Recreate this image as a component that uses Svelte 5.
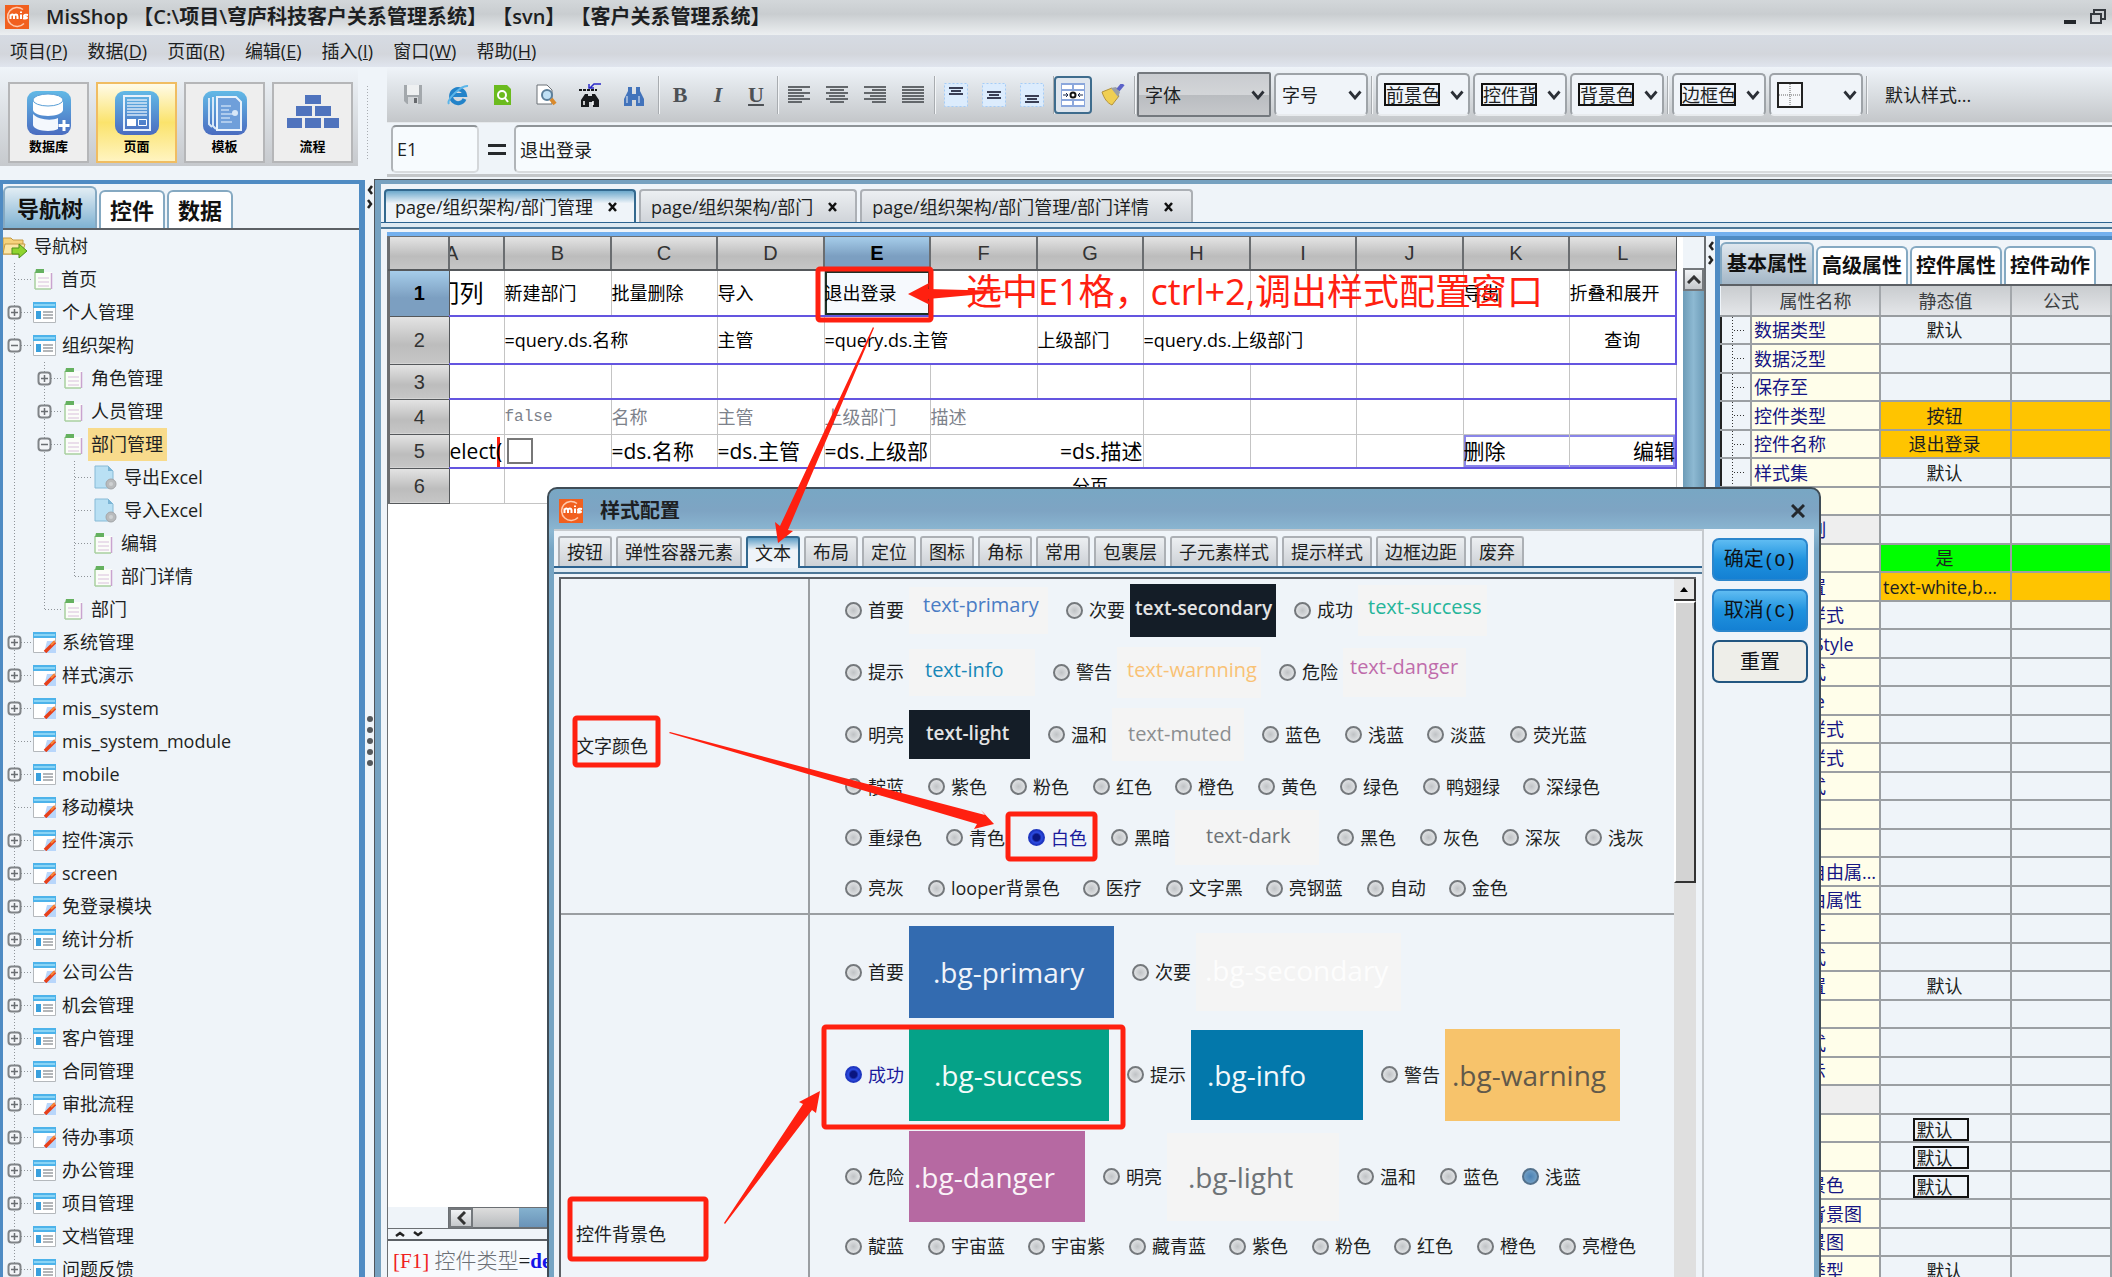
<script>
  const menus = [
    ["项目", "P"],
    ["数据", "D"],
    ["页面", "R"],
    ["编辑", "E"],
    ["插入", "I"],
    ["窗口", "W"],
    ["帮助", "H"],
  ];

  const modes = [
    { icon: "db", label: "数据库" },
    { icon: "page", label: "页面", active: true },
    { icon: "tpl", label: "模板" },
    { icon: "flow", label: "流程" },
  ];

  // guides: one entry per gutter column; v = through line, t = tick, l = last
  const tree = [
    { label: "首页", icon: "page", guides: "t" },
    { label: "个人管理", icon: "table", guides: "t", mark: "+" },
    { label: "组织架构", icon: "table", guides: "t", mark: "-" },
    { label: "角色管理", icon: "page", guides: "vt", mark: "+" },
    { label: "人员管理", icon: "page", guides: "vt", mark: "+" },
    { label: "部门管理", icon: "page", guides: "vt", mark: "-", selected: true },
    { label: "导出Excel", icon: "excel", guides: "vvt" },
    { label: "导入Excel", icon: "excel", guides: "vvt" },
    { label: "编辑", icon: "page", guides: "vvt" },
    { label: "部门详情", icon: "page", guides: "vvl" },
    { label: "部门", icon: "page", guides: "vl" },
    { label: "系统管理", icon: "edit", guides: "t", mark: "+" },
    { label: "样式演示", icon: "edit", guides: "t", mark: "+" },
    { label: "mis_system", icon: "edit", guides: "t", mark: "+" },
    { label: "mis_system_module", icon: "edit", guides: "t" },
    { label: "mobile", icon: "table", guides: "t", mark: "+" },
    { label: "移动模块", icon: "edit", guides: "t" },
    { label: "控件演示", icon: "edit", guides: "t", mark: "+" },
    { label: "screen", icon: "edit", guides: "t", mark: "+" },
    { label: "免登录模块", icon: "edit", guides: "t", mark: "+" },
    { label: "统计分析", icon: "table", guides: "t", mark: "+" },
    { label: "公司公告", icon: "edit", guides: "t", mark: "+" },
    { label: "机会管理", icon: "table", guides: "t", mark: "+" },
    { label: "客户管理", icon: "table", guides: "t", mark: "+" },
    { label: "合同管理", icon: "table", guides: "t", mark: "+" },
    { label: "审批流程", icon: "edit", guides: "t", mark: "+" },
    { label: "待办事项", icon: "edit", guides: "t", mark: "+" },
    { label: "办公管理", icon: "table", guides: "t", mark: "+" },
    { label: "项目管理", icon: "table", guides: "t", mark: "+" },
    { label: "文档管理", icon: "table", guides: "t", mark: "+" },
    { label: "问题反馈", icon: "table", guides: "t", mark: "+" },
  ];

  const pages = ["page/组织架构/部门管理", "page/组织架构/部门", "page/组织架构/部门管理/部门详情"];
  const columns = ["B", "C", "D", "E", "F", "G", "H", "I", "J", "K", "L"];

  const props = [
    { name: "数据类型", value: "默认", guide: true },
    { name: "数据泛型", guide: true },
    { name: "保存至", guide: true },
    { name: "控件类型", value: "按钮", tone: "orange", guide: true },
    { name: "控件名称", value: "退出登录", tone: "orange", guide: true },
    { name: "样式集", value: "默认", guide: true },
    { name: "" },
    { name: "权限控制", group: true },
    { name: "可见", value: "是", tone: "green" },
    { name: "样式配置", value: "text-white,bg-success", tone: "orange" },
    { name: "自定义样式" },
    { name: "headerStyle" },
    { name: "行内样式" },
    { name: "rowstyle" },
    { name: "标题栏样式" },
    { name: "内容区样式" },
    { name: "文字样式" },
    { name: "" },
    { name: "" },
    { name: "外层的自由属性值" },
    { name: "控件自由属性" },
    { name: "控件事件" },
    { name: "提示方式" },
    { name: "显示位置", value: "默认" },
    { name: "" },
    { name: "对齐方式" },
    { name: "错误提示" },
    { name: "颜色", group: true },
    { name: "前景", value: "默认", boxed: true },
    { name: "背景", value: "默认", boxed: true },
    { name: "控件背景色", value: "默认", boxed: true },
    { name: "单元格背景图" },
    { name: "控件背景图" },
    { name: "背景的类型", value: "默认" },
  ];

  const styleTabs = [
    "按钮", "弹性容器元素", "文本", "布局", "定位", "图标", "角标", "常用",
    "包裹层", "子元素样式", "提示样式", "边框边距", "废弃",
  ];

  const pale = "#f4f4f4";
  const navy = "#141d27";

  const textRows = [
    {
      height: 62,
      items: [
        { label: "首要", sw: { text: "text-primary", w: 139, h: 47, bg: pale, fg: "#4a7cc4", left: 14, lift: 10 } },
        { label: "次要", sw: { text: "text-secondary", w: 146, h: 53, bg: navy, fg: "#e4e4e4", left: 5, lift: 4, bold: true } },
        { label: "成功", sw: { text: "text-success", w: 129, h: 51, bg: pale, fg: "#25b59a", left: 10, lift: 6 } },
      ],
    },
    {
      height: 62,
      items: [
        { label: "提示", sw: { text: "text-info", w: 126, h: 47, bg: pale, fg: "#1787b8", left: 16, lift: 4 } },
        { label: "警告", sw: { text: "text-warnning", w: 144, h: 51, bg: pale, fg: "#f9c274", left: 10, lift: 4 } },
        { label: "危险", sw: { text: "text-danger", w: 123, h: 49, bg: pale, fg: "#bf6cab", left: 7, lift: 10 } },
      ],
    },
    {
      height: 63,
      items: [
        { label: "明亮", sw: { text: "text-light", w: 121, h: 49, bg: navy, fg: "#e4e4e4", left: 17, lift: 4, bold: true } },
        { label: "温和", sw: { text: "text-muted", w: 132, h: 53, bg: pale, fg: "#8b8e90", left: 16, lift: 2 } },
        { label: "蓝色" }, { label: "浅蓝" }, { label: "淡蓝" }, { label: "荧光蓝" },
      ],
    },
    {
      height: 41,
      items: ["靛蓝", "紫色", "粉色", "红色", "橙色", "黄色", "绿色", "鸭翅绿", "深绿色"].map((label) => ({ label })),
    },
    {
      height: 61,
      items: [
        { label: "重绿色" }, { label: "青色" }, { label: "白色", checked: true },
        { label: "黑暗", sw: { text: "text-dark", w: 144, h: 55, bg: pale, fg: "#6d7276", left: 31, lift: 4 } },
        { label: "黑色" }, { label: "灰色" }, { label: "深灰" }, { label: "浅灰" },
      ],
    },
    {
      height: 40,
      items: ["亮灰", "looper背景色", "医疗", "文字黑", "亮钢蓝", "自动", "金色"].map((label) => ({ label })),
    },
  ];

  const bgRows = [
    {
      height: 102,
      items: [
        { label: "首要", sw: { text: ".bg-primary", w: 205, h: 92, bg: "#336bb0", fg: "#f0f4fa", left: 24, lift: 0, big: true } },
        { label: "次要", sw: { text: ".bg-secondary", w: 205, h: 78, bg: pale, fg: "#fdfdfd", left: 9, lift: 4, big: true } },
      ],
    },
    {
      height: 103,
      items: [
        { label: "成功", checked: true, sw: { text: ".bg-success", w: 200, h: 92, bg: "#05a288", fg: "#f2fbf9", left: 25, lift: 0, big: true } },
        { label: "提示", sw: { text: ".bg-info", w: 172, h: 90, bg: "#0378ab", fg: "#f2f8fb", left: 16, lift: 0, big: true } },
        { label: "警告", sw: { text: ".bg-warning", w: 175, h: 92, bg: "#f7c36b", fg: "#62594a", left: 7, lift: 0, big: true } },
      ],
    },
    {
      height: 101,
      items: [
        { label: "危险", sw: { text: ".bg-danger", w: 176, h: 91, bg: "#b669a2", fg: "#faf3f8", left: 5, lift: 0, big: true } },
        { label: "明亮", sw: { text: ".bg-light", w: 172, h: 88, bg: pale, fg: "#6d7276", left: 21, lift: 0, big: true } },
        { label: "温和" }, { label: "蓝色" }, { label: "浅蓝", hover: true },
      ],
    },
    {
      height: 38,
      items: ["靛蓝", "宇宙蓝", "宇宙紫", "藏青蓝", "紫色", "粉色", "红色", "橙色", "亮橙色"].map((label) => ({ label })),
    },
  ];

  const sections = [
    { key: "text", title: "文字颜色", rows: textRows },
    { key: "bg", title: "控件背景色", rows: bgRows },
  ];
</script>

{#snippet logo()}
  <svg class="logo" viewBox="0 0 24 24" aria-hidden="true">
    <rect width="24" height="24" fill="#f1601f" />
    <path d="M19 18.500a9.500 9.500 0 1 1-1-14" fill="none" stroke="#ffc9ac" stroke-width="1.500" />
    <path d="M5.500 14V9.500M5.500 11c.8-2 3.500-2 3.500 .5V14M9 11c.8-2 3.500-2 3.500 .5V14M16 9.500V14M16 6.500V8M23 10c-4.500-1-5 1.500-2.500 2s2 2-2.500 1.300" fill="none" stroke="#fff" stroke-width="2" />
  </svg>
{/snippet}

{#snippet chevron()}
  <svg class="chevron" viewBox="0 0 14 10" aria-hidden="true">
    <path d="M1.500 1.500L7 8l5.500-6.500" fill="none" stroke="#2b2f36" stroke-width="2.800" />
  </svg>
{/snippet}

{#snippet modeIcon(kind)}
  <svg class="mode-icon" viewBox="0 0 46 46" aria-hidden="true">
    {#if kind !== "flow"}
      <defs>
        <linearGradient id="tile-{kind}" x1="0" y1="0" x2="0" y2="1">
          <stop offset="0" stop-color="#62b9e6" />
          <stop offset="1" stop-color="#4a6cc0" />
        </linearGradient>
      </defs>
      <rect x="1" y="1" width="44" height="44" rx="9" fill="url(#tile-{kind})" />
    {/if}
    {#if kind === "db"}
      <path d="M7 11v9c0 3 7 6 15 6s15-3 15-6v-9z" fill="#fff" />
      <ellipse cx="22" cy="10" rx="15" ry="6" fill="#fff" stroke="#5a9fd6" />
      <path d="M7 24v11c0 3 7 6 15 6 4 0 8-1 10-2V28c-6 3-20 2-25-4z" fill="#f4f8fd" />
      <path d="M38 30v11M32.500 35.500h11" stroke="#fff" stroke-width="3" />
    {:else if kind === "page"}
      <rect x="10" y="6" width="26" height="34" fill="none" stroke="#e7f1fb" stroke-width="2" />
      <path d="M13 10h20M13 13h20M13 16h20M13 19h20M13 22h20M13 25h20" stroke="#d8e8f8" stroke-width="1.500" />
      <path d="M13 29h9v7h-9z" fill="#fff" />
      <path d="M24.500 29.500h8v6h-8z" fill="none" stroke="#fff" />
    {:else if kind === "tpl"}
      <path d="M7 8v26l3 3M11 7v29l3 3" fill="none" stroke="#d8e8f8" stroke-width="2" />
      <path d="M15 7h19l5 5v28H15z" fill="#6f9fda" stroke="#eaf3fc" stroke-width="2" />
      <path d="M19 16h10M19 20h8M19 24h12M19 28h9M19 32h11" stroke="#c4daf3" stroke-width="1.500" />
      <circle cx="33" cy="23" r="3" fill="#d8e8f8" />
    {:else}
      <path d="M15 5h16v9H15zM6 16h16v10H6zM25 16h16v10H25zM-3 28h15v10H-3zM15 28h16v10H15zM34 28h15v10H34z" fill="#4f73bd" />
    {/if}
  </svg>
{/snippet}

{#snippet treeIcon(kind)}
  {#if kind === "page"}
    <svg width="22" height="23" viewBox="0 0 22 23" aria-hidden="true">
      <path d="M2 4h17v17H2z" fill="#fbfdf9" />
      <path d="M2 4v17M2 21h16" stroke="#a9cfa0" stroke-width="1.500" />
      <path d="M18.500 5v16" stroke="#c9a3cf" stroke-width="1.500" />
      <path d="M3 1h8v4H2z" fill="#65b15f" />
      <path d="M5 10h11M5 14h11M5 18h11" stroke="#d8bfdb" />
    </svg>
  {:else if kind === "excel"}
    <svg width="25" height="25" viewBox="0 0 25 25" aria-hidden="true">
      <path d="M2 1h13l5 5v17H2z" fill="#b9e0f4" stroke="#87bad6" />
      <path d="M15 1l5 5h-5z" fill="#7cb5d6" />
      <circle cx="18" cy="19" r="5" fill="#b9bbbd" stroke="#a4a6a8" />
      <circle cx="18" cy="19" r="2" fill="#cfd1d3" />
    </svg>
  {:else}
    <svg width="23" height="21" viewBox="0 0 23 21" aria-hidden="true">
      <path d="M.5.500h22v20H.5z" fill="#fff" stroke="#b4b8bc" />
      <path d="M0 0h23v6H0z" fill="#4db3ea" />
      <path d="M1 2h21v2H1z" fill="#8ad4f5" />
      {#if kind === "table"}
        <path d="M3 9h5v8H3z" fill="#3aa0dd" />
        <path d="M10 10h10M10 13h10M10 16h10" stroke="#9a9ea2" stroke-width="1.500" />
      {:else}
        <path d="M14 9h9v12H11z" fill="#b8d6fb" />
        <path d="M22 10L12 20" stroke="#e8401a" stroke-width="3.500" />
        <path d="M22 9l-4 4" stroke="#f78a3a" stroke-width="2" />
      {/if}
    </svg>
  {/if}
{/snippet}

{#snippet guide(kind, mark)}
  <svg width="30" height="33" viewBox="0 0 30 33" aria-hidden="true">
    <path d={kind === "l" ? "M11.500 0v17" : "M11.500 0v33"} stroke="#8f9499" stroke-dasharray="1 2" />
    {#if kind !== "v"}
      <path d="M12 16.500h17" stroke="#8f9499" stroke-dasharray="1 2" />
    {/if}
    {#if mark}
      <rect x="5.500" y="10.500" width="12" height="12" rx="3" fill="#f3f5f8" stroke="#808488" stroke-width="2" />
      <path d={mark === "+" ? "M8 16.500h7M11.500 13v7" : "M8 16.500h7"} stroke="#6a6e72" stroke-width="1.500" />
    {/if}
  </svg>
{/snippet}

{#snippet align(kind)}
  <button class="tool" aria-label={kind}>
    <svg width="22" height="18" viewBox="0 0 22 18" aria-hidden="true">
      {#each [22, 14, 22, 16, 22, 14] as w, i}
        {@const len = kind === "justify" ? 22 : w}
        <rect
          x={kind === "right" ? 22 - len : kind === "center" ? (22 - len) / 2 : 0}
          y={i * 3}
          width={len}
          height="2"
          fill="#63676b"
        />
      {/each}
    </svg>
  </button>
{/snippet}

{#snippet valign(y)}
  <button class="tool" aria-label="vertical align">
    <svg width="24" height="24" viewBox="0 0 24 24" aria-hidden="true">
      <rect x=".5" y=".5" width="23" height="23" fill="#dcecfd" stroke="#a5cdf8" stroke-dasharray="2 2" />
      <path d="M5 {y}h14M7 {y + 3}h10M5 {y + 6}h14" stroke="#3a3f55" stroke-width="2" />
    </svg>
  </button>
{/snippet}

{#snippet binoculars(fill)}
  <path d="M6 8h4v3h4V8h4l4 8v7h-8v-6h-4v6H2v-7z" fill={fill} />
  <path d="M6 4h4v4H6zM14 4h4v4h-4z" fill={fill} />
  <path d="M5 13v7M17 13v7" stroke="#fff" stroke-opacity=".6" stroke-width="1.500" />
{/snippet}

<div class="app">
  <header class="titlebar">
    {@render logo()}
    <h1>MisShop 【C:\项目\穹庐科技客户关系管理系统】 【svn】 【客户关系管理系统】</h1>
    <button aria-label="最小化">
      <svg width="12" height="16" viewBox="0 0 12 16"><path d="M0 11h12v4H0z" fill="#23272b" /></svg>
    </button>
    <button aria-label="还原">
      <svg width="16" height="16" viewBox="0 0 16 16">
        <path d="M4 4V1h11v9h-3M1 5h10v9H1z" fill="none" stroke="#34393e" stroke-width="2" />
      </svg>
    </button>
  </header>

  <nav class="menubar">
    {#each menus as [label, key]}
      <button>{label}(<u>{key}</u>)</button>
    {/each}
  </nav>

  <div class="ribbon">
    <div class="modes">
      {#each modes as m}
        <button class="mode" class:active={m.active}>
          {@render modeIcon(m.icon)}
          <span>{m.label}</span>
        </button>
      {/each}
    </div>
    <div class="grip"></div>

    <div class="bars">
      <div class="toolbar">
        <button class="tool" aria-label="保存">
          <svg width="20" height="21" viewBox="0 0 20 21">
            <path d="M1 1h18v19H4l-3-3z" fill="#a3a8ac" />
            <path d="M4 1h12v10H4z" fill="#eef0f1" />
            <path d="M5 13h10v7H5z" fill="#d2d5d8" />
            <path d="M11 14h3v5h-3z" fill="#66696d" />
          </svg>
        </button>
        <button class="tool" aria-label="浏览器">
          <svg width="22" height="22" viewBox="0 0 22 22">
            <path d="M17.500 15a7 7 0 1 1 .5-4H6" fill="none" stroke="#2383c9" stroke-width="4" />
            <path d="M2 20C-1 16 14 1 21 2" fill="none" stroke="#5bb6ea" stroke-width="2" />
          </svg>
        </button>
        <button class="tool" aria-label="查询">
          <svg width="17" height="20" viewBox="0 0 17 20">
            <path d="M0 0h13l4 4v16H0z" fill="#6bbb1e" />
            <circle cx="8" cy="10" r="4" fill="none" stroke="#fff" stroke-width="2" />
            <path d="M11 13l3 4" stroke="#fff" stroke-width="2" />
          </svg>
        </button>
        <button class="tool" aria-label="预览">
          <svg width="22" height="22" viewBox="0 0 22 22">
            <path d="M2 1h10l5 5v14H2z" fill="#fff" stroke="#6b7176" />
            <circle cx="12" cy="11" r="5" fill="#bfe0f5" stroke="#5b7f9b" stroke-width="2" />
            <path d="M16 15l4 5" stroke="#d98a2c" stroke-width="4" />
          </svg>
        </button>
        <button class="tool" aria-label="查找替换">
          <svg width="24" height="26" viewBox="0 0 24 26">
            <path d="M7 12h3v2h4v-2h3l4 6v7h-6v-5h-4v5H3v-7z" fill="#17191c" />
            <path d="M6 19v4M15 19v4" stroke="#fff" stroke-width="1.500" />
            <path d="M1 8h18" stroke="#17191c" stroke-width="2" stroke-dasharray="3 1" />
            <path d="M12 6l4-4h7M11 2v4h5" fill="none" stroke="#2a2ac8" stroke-width="1.500" />
          </svg>
        </button>
        <button class="tool" aria-label="查找">
          <svg width="24" height="24" viewBox="0 0 24 24">{@render binoculars("#4273bb")}</svg>
        </button>
        <i class="sep"></i>
        <button class="tool letter"><b>B</b></button>
        <button class="tool letter"><em>I</em></button>
        <button class="tool letter"><u>U</u></button>
        <i class="sep"></i>
        {@render align("left")}
        {@render align("center")}
        {@render align("right")}
        {@render align("justify")}
        <i class="sep"></i>
        {@render valign(5)}
        {@render valign(9)}
        {@render valign(13)}
        <i class="sep"></i>
        <button class="tool pressed" aria-label="合并单元格">
          <svg width="24" height="24" viewBox="0 0 24 24">
            <path d="M0 0h24v24H0z" fill="#8ba7dc" />
            <path d="M1 2h10v4H1zM13 2h10v4H13zM1 18h10v4H1zM13 18h10v4H13zM1 8h22v8H1z" fill="#fff" />
            <path d="M2 12h5M17 12h5M5 10l2 2-2 2M19 10l-2 2 2 2" fill="none" stroke="#1c2a4d" />
            <circle cx="12" cy="12" r="2.500" fill="none" stroke="#111" stroke-width="2" />
          </svg>
        </button>
        <button class="tool" aria-label="格式刷">
          <svg width="24" height="22" viewBox="0 0 24 22">
            <path d="M1 8l10-4 7 8-7 9c-5-2-8-7-10-13z" fill="#f0cf52" stroke="#b3923a" />
            <path d="M10 4l5-1 4 5-2 5z" fill="#9aa0a8" />
            <path d="M17 6l5-6" stroke="#5b62c8" stroke-width="4" />
          </svg>
        </button>
        <i class="sep"></i>
        <div class="combo font">
          <select aria-label="字体"><option>字体</option></select>
          {@render chevron()}
        </div>
        <div class="combo">
          <select aria-label="字号"><option>字号</option></select>
          {@render chevron()}
        </div>
        <i class="sep"></i>
        {#each ["前景色", "控件背景色", "背景色"] as label}
          <div class="combo boxed">
            <select aria-label={label}><option>{label}</option></select>
            {@render chevron()}
          </div>
        {/each}
        <i class="sep"></i>
        <div class="combo boxed">
          <select aria-label="边框色"><option>边框色</option></select>
          {@render chevron()}
        </div>
        <button class="combo border-pick" aria-label="边框">
          <svg width="26" height="26" viewBox="0 0 26 26">
            <rect x="1" y="1" width="24" height="24" fill="#f7f9fc" stroke="#222" stroke-width="2" />
            <path d="M13 2v22M2 13h22" stroke="#666" stroke-dasharray="1 1" />
          </svg>
          {@render chevron()}
        </button>
        <i class="sep"></i>
        <button class="plain">默认样式...</button>
      </div>
      <div class="formula">
        <input class="cell-ref" aria-label="单元格" value="E1" />
        <span class="eq"></span>
        <input class="cell-val" aria-label="内容" value="退出登录" />
      </div>
    </div>
  </div>

  <main>
    <aside class="nav">
      <div class="big-tabs">
        <button class="active">导航树</button>
        <button>控件</button>
        <button>数据</button>
      </div>
      <ul class="tree">
        <li class="root">
          <svg width="25" height="24" viewBox="0 0 25 24" aria-hidden="true">
            <path d="M0 3h8l2 2h10v14H0z" fill="#f5d27b" stroke="#c59a45" />
            <path d="M2 9h20l-3 10H0z" fill="#fbe6a6" stroke="#c59a45" />
            <path d="M9 13h7V9l8 7-8 7v-4H9z" fill="#8fd42f" stroke="#4e8f1c" />
          </svg>
          <span>导航树</span>
        </li>
        {#each tree as node}
          <li>
            {#each node.guides as g, i}
              {@render guide(g, i === node.guides.length - 1 ? node.mark : "")}
            {/each}
            {@render treeIcon(node.icon)}
            <span class:selected={node.selected}>{node.label}</span>
          </li>
        {/each}
      </ul>
    </aside>

    <div class="splitter">
      <svg width="8" height="24" viewBox="0 0 8 24" aria-hidden="true">
        <path d="M6 1L3 5l3 4M2 15l3 4-3 4" fill="none" stroke="#222" stroke-width="2.500" />
      </svg>
      <div class="dots">
        {#each Array(5) as _}<i></i>{/each}
      </div>
    </div>

    <section class="workspace">
      <div class="page-tabs">
        {#each pages as p, i}
          <button class:active={i === 0}>
            {p}
            <svg width="9" height="10" viewBox="0 0 9 10" aria-hidden="true">
              <path d="M1 1l7 8M8 1L1 9" stroke="#111" stroke-width="2.500" />
            </svg>
          </button>
        {/each}
      </div>
      <div class="rule"></div>
      <div class="desk">
        <div class="editor">
          <div class="sheet-wrap">
            <div class="sheet">
              <table class="grid">
                <colgroup>
                  <col class="c-head" />
                  <col class="c-a" />
                  {#each columns as c}<col class:odd={"CEGIK".includes(c)} class="c-std" />{/each}
                </colgroup>
                <thead>
                  <tr>
                    <th></th>
                    <th class="cut">A</th>
                    {#each columns as c}<th class:on={c === "E"}>{c}</th>{/each}
                  </tr>
                </thead>
                <tbody>
                  <tr class="r1 blue">
                    <th class="on">1</th>
                    <td class="end"><span>部门列</span></td>
                    <td>新建部门</td>
                    <td>批量删除</td>
                    <td>导入</td>
                    <td class="picked">退出登录</td>
                    <td></td><td></td><td></td><td></td><td></td>
                    <td>导出</td>
                    <td>折叠和展开</td>
                  </tr>
                  <tr class="r2 blue">
                    <th>2</th>
                    <td></td>
                    <td colspan="2">=query.ds.名称</td>
                    <td>主管</td>
                    <td colspan="2">=query.ds.主管</td>
                    <td>上级部门</td>
                    <td colspan="2">=query.ds.上级部门</td>
                    <td></td><td></td>
                    <td class="mid">查询</td>
                  </tr>
                  <tr class="r3 blue">
                    <th>3</th>
                    {#each Array(12) as _}<td></td>{/each}
                  </tr>
                  <tr class="r4">
                    <th>4</th>
                    <td></td>
                    <td class="dim mono">false</td>
                    <td class="dim">名称</td>
                    <td class="dim">主管</td>
                    <td class="dim">上级部门</td>
                    <td class="dim" colspan="2">描述</td>
                    <td></td><td></td><td></td><td></td><td></td>
                  </tr>
                  <tr class="r5 blue large">
                    <th>5</th>
                    <td class="select-cell">elect(</td>
                    <td><input type="checkbox" aria-label="选择" /></td>
                    <td>=ds.名称</td>
                    <td>=ds.主管</td>
                    <td>=ds.上级部</td>
                    <td class="right" colspan="2">=ds.描述</td>
                    <td></td><td></td><td></td>
                    <td class="box-l">删除</td>
                    <td class="box-r right">编辑</td>
                  </tr>
                  <tr class="r6">
                    <th>6</th>
                    <td></td>
                    <td class="mid" colspan="11">分页</td>
                  </tr>
                </tbody>
              </table>
            </div>
            <div class="vscroll">
              <button aria-label="向上滚动">
                <svg width="14" height="9" viewBox="0 0 14 9"><path d="M1 8l6-6 6 6" fill="none" stroke="#333" stroke-width="3" /></svg>
              </button>
              <div class="thumb"></div>
            </div>
          </div>
          <div class="hscroll">
            <div class="track">
              <button aria-label="向左滚动">
                <svg width="9" height="14" viewBox="0 0 9 14"><path d="M8 1L2 7l6 6" fill="none" stroke="#333" stroke-width="3" /></svg>
              </button>
              <div class="thumb"></div>
            </div>
          </div>
          <div class="hsplit">
            <svg width="28" height="8" viewBox="0 0 28 8" aria-hidden="true">
              <path d="M1 6l4-3 4 3M19 2l4 3 4-3" fill="none" stroke="#222" stroke-width="2.500" />
            </svg>
          </div>
          <div class="hint"><span class="key">[F1]</span> <span class="what">控件类型</span>=<b>default</b></div>
        </div>

        <div class="splitter slim">
          <svg width="8" height="24" viewBox="0 0 8 24" aria-hidden="true">
            <path d="M6 1L3 5l3 4M2 15l3 4-3 4" fill="none" stroke="#222" stroke-width="2.500" />
          </svg>
        </div>

        <aside class="props">
          <div class="big-tabs small">
            <button class="active">基本属性</button>
            <button>高级属性</button>
            <button>控件属性</button>
            <button>控件动作</button>
          </div>
          <table>
            <colgroup><col class="p-guide" /><col class="p-name" /><col class="p-value" /><col /></colgroup>
            <thead>
              <tr><th></th><th>属性名称</th><th>静态值</th><th class="last">公式</th></tr>
            </thead>
            <tbody>
              {#each props as p}
                <tr>
                  <td class="guide" class:lined={p.guide}></td>
                  <td class="name" class:group={p.group}>{p.name}</td>
                  <td class="value {p.tone ?? ''}">
                    {#if p.boxed}<span class="frame">{p.value}</span>{:else}{p.value ?? ""}{/if}
                  </td>
                  <td class={p.tone ?? ""}></td>
                </tr>
              {/each}
            </tbody>
          </table>
        </aside>
      </div>
    </section>
  </main>

  <div class="dialog" role="dialog" aria-label="样式配置">
    <header>
      {@render logo()}
      <h2>样式配置</h2>
      <button aria-label="关闭">
        <svg width="14" height="14" viewBox="0 0 14 14"><path d="M1 1l12 12M13 1L1 13" stroke="#23282d" stroke-width="3" /></svg>
      </button>
    </header>
    <div class="dialog-body">
      <div class="dialog-main">
        <div class="style-tabs">
          {#each styleTabs as t}
            <button class:active={t === "文本"}>{t}</button>
          {/each}
        </div>
        <div class="rule"></div>
        <div class="pane">
          <div class="sections">
            {#each sections as s}
              <fieldset class={s.key} aria-label={s.title}>
                <div class="section-title">{s.title}</div>
                <div class="rows">
                  {#each s.rows as row}
                    <div class="row" style="height: {row.height}px">
                      {#each row.items as item}
                        <label class="opt" class:checked={item.checked} class:has-swatch={item.sw}>
                          <input type="radio" name={s.key} checked={item.checked} class:hover={item.hover} />
                          <span>{item.label}</span>
                          {#if item.sw}
                            <span
                              class="swatch"
                              class:big={item.sw.big}
                              class:bold={item.sw.bold}
                              style="width: {item.sw.w}px; height: {item.sw.h}px; background: {item.sw.bg}; color: {item.sw.fg}; padding: 0 0 {item.sw.lift}px {item.sw.left}px"
                            >{item.sw.text}</span>
                          {/if}
                        </label>
                      {/each}
                    </div>
                  {/each}
                </div>
              </fieldset>
            {/each}
          </div>
          <div class="classic-scroll">
            <button aria-label="向上滚动">
              <svg width="8" height="5" viewBox="0 0 8 5"><path d="M0 5l4-5 4 5z" fill="#000" /></svg>
            </button>
            <div class="thumb"></div>
          </div>
        </div>
      </div>
      <div class="dialog-side">
        <button class="primary">确定<span>(O)</span></button>
        <button class="primary">取消<span>(C)</span></button>
        <button>重置</button>
      </div>
    </div>
  </div>

  <svg class="marks" width="2112" height="1277" viewBox="0 0 2112 1277" aria-hidden="true">
    <g fill="none" stroke="#ff2010" stroke-width="5">
      <rect x="818" y="269" width="113" height="51" rx="2" />
      <rect x="575" y="718" width="83" height="47" rx="2" />
      <rect x="1008" y="814" width="87" height="45" rx="2" />
      <rect x="824" y="1027" width="299" height="100" rx="2" />
      <rect x="570" y="1199" width="136" height="60" rx="2" />
    </g>
    <g fill="#ff2010">
      <path d="M908 294l21-11-1 6 77 2v1l-77 7 2 6z" />
      <path d="M778 543l-3-21 5 4 93-199 1 1-86 202 5 1z" />
      <path d="M994 824l-20 5 3-5-308-91 1-1 315 83-4-5z" />
      <path d="M820 1091l-4 22-4-3-87 114-1-1 79-119-4-2z" />
    </g>
  </svg>
  <p class="note">选中E1格，ctrl+2,调出样式配置窗口</p>
</div>

<style>
  :global(body) {
    margin: 0;
  }

  .app {
    position: relative;
    display: flex;
    flex-direction: column;
    height: 100vh;
    overflow: hidden;
    background: #eff4f9;
    color: #1d1f22;
    font: 18px/24px "Open Sans", "Noto Sans CJK SC", sans-serif;
  }

  .app * {
    box-sizing: border-box;
  }

  button,
  select,
  input {
    margin: 0;
    padding: 0;
    border: 0;
    background: none;
    color: inherit;
    font: inherit;
    white-space: nowrap;
  }

  svg {
    display: block;
    flex-shrink: 0;
  }

  .logo {
    width: 24px;
    height: 24px;
  }

  .titlebar {
    display: flex;
    align-items: center;
    height: 35px;
    flex-shrink: 0;
    padding: 0 6px 2px 5px;
    background: linear-gradient(#d3d7da, #c9cdd0 40%, #eceff1);
  }

  h1 {
    flex: 1;
    margin: 0 0 0 17px;
    font-size: 20px;
    line-height: 28px;
    font-weight: 600;
    white-space: pre;
  }

  .titlebar button {
    margin-left: 14px;
  }

  .menubar {
    display: flex;
    align-items: center;
    gap: 20px;
    height: 32px;
    flex-shrink: 0;
    padding-left: 10px;
    background: linear-gradient(#d6dbe3, #d3d6dc 60%, #e0e5ee);
  }

  .ribbon {
    display: flex;
    height: 113px;
    flex-shrink: 0;
  }

  .modes {
    display: flex;
    gap: 7px;
    width: 358px;
    height: 99px;
    padding: 15px 0 0 8px;
    background: linear-gradient(#eff4f9, #c6c9cd);
  }

  .mode {
    display: flex;
    flex-direction: column;
    align-items: center;
    width: 81px;
    height: 81px;
    padding-top: 6px;
    border: 2px solid #b5b6b8;
    background: #eeeeee;
    color: #000;
    font-size: 13px;
    line-height: 20px;
    font-weight: 700;
  }

  .mode.active {
    border-color: #f0bd62;
    background: linear-gradient(#fffbe8, #fbe36c 50%, #fff4c0);
  }

  .mode-icon {
    width: 46px;
    height: 46px;
    overflow: visible;
  }

  .grip {
    width: 4px;
    height: 76px;
    margin: 18px 17px 0 8px;
    background: radial-gradient(#a9adb2 1px, transparent 1px) 0 0 / 3px 3px;
  }

  .bars {
    flex: 1;
    min-width: 0;
  }

  .toolbar {
    display: flex;
    align-items: center;
    height: 55px;
    padding-left: 9px;
    background: linear-gradient(#eff4f9, #c4c7ca);
  }

  .tool {
    display: flex;
    align-items: center;
    justify-content: center;
    width: 38px;
    height: 38px;
    flex-shrink: 0;
  }

  .tool:nth-child(-n + 6) {
    width: 44px;
  }

  .tool:nth-child(1) {
    width: 34px;
    margin-right: 6px;
  }

  .letter {
    color: #4d5155;
    font: 22px/24px "Liberation Serif", serif;
  }

  .letter u {
    font-weight: 700;
  }

  .letter em {
    font-weight: 700;
  }

  .tool.pressed {
    margin-right: 2px;
    margin-left: -2px;
    border: 2px solid #3e6c8d;
    border-radius: 4px;
    background: #dfe6ee;
  }

  .sep {
    width: 2px;
    height: 38px;
    margin: 0 1px 0 2px;
    flex-shrink: 0;
    border-left: 1px solid #a8acb0;
    background: #f3f5f7;
  }

  .combo {
    display: flex;
    align-items: center;
    justify-content: space-between;
    width: 94px;
    height: 43px;
    margin: 0 1px 0 2px;
    padding: 0 4px 0 6px;
    flex-shrink: 0;
    border: 2px solid #9ea3a8;
    border-bottom-color: #e8ebee;
    border-radius: 5px;
    background: #f0f4f9;
  }

  .combo select {
    flex: 1;
    min-width: 0;
    appearance: none;
  }

  .combo.font {
    width: 134px;
    height: 45px;
    margin-left: 0;
    border-color: #74797e;
    border-radius: 2px;
    background: linear-gradient(#c9ccd0, #d3d5d8 50%, #b9bcc0 51%, #c6c8cb);
  }

  .combo.boxed select {
    flex: 0 0 56px;
    height: 23px;
    border: 2px solid #111;
    font-size: 18px;
    line-height: 20px;
  }

  .chevron {
    width: 14px;
    height: 10px;
  }

  .plain {
    margin-left: 16px;
  }

  .formula {
    display: flex;
    align-items: center;
    height: 55px;
    padding: 1px 0 0 4px;
    border-top: 1px solid #e6e9ec;
    border-bottom: 3px solid #c3c6c9;
  }

  .formula input {
    height: 48px;
    border: 2px solid #a2a7ab;
    border-color: #8f9498 #d4d7da #d8dbde #b0b4b8;
    border-radius: 5px;
    background: #f7fbfe;
    padding: 0 4px;
  }

  .cell-ref {
    width: 88px;
  }

  .eq {
    width: 18px;
    height: 11px;
    margin: 0 8px 0 9px;
    border-top: 3px solid #26292c;
    border-bottom: 3px solid #26292c;
  }

  .formula .cell-val {
    flex: 1;
    min-width: 0;
    border-right: 0;
    border-radius: 5px 0 0 5px;
  }

  main {
    display: flex;
    flex: 1;
    min-height: 0;
  }

  .nav {
    width: 365px;
    flex-shrink: 0;
    border: 4px solid #4f8bc3;
    border-width: 4px 6px 0 3px;
  }

  .big-tabs {
    display: flex;
    align-items: flex-end;
    gap: 2px;
    height: 46px;
    border-bottom: 2px solid #5c6065;
  }

  .big-tabs button {
    height: 38px;
    padding: 0 9px;
    border: 2px solid #85a9c2;
    border-bottom: 0;
    border-radius: 6px 6px 0 0;
    background: #fff;
    color: #111;
    font-size: 22px;
    font-weight: 600;
  }

  .big-tabs button.active {
    height: 42px;
    padding: 0 12px;
    background: linear-gradient(#e2edf4, #7fb2d2);
  }

  .tree {
    margin: 0;
    padding: 0;
    list-style: none;
  }

  .tree li {
    display: flex;
    align-items: center;
    height: 33px;
  }

  .tree li span {
    margin-left: 4px;
    padding: 0 4px 0 2px;
    line-height: 33px;
  }

  .tree li .selected {
    margin-left: 3px;
    padding-left: 3px;
    background: #f8db8c;
  }

  .splitter {
    display: flex;
    flex-direction: column;
    align-items: center;
    width: 10px;
    flex-shrink: 0;
    padding-top: 5px;
  }

  .dots {
    display: flex;
    flex-direction: column;
    gap: 5px;
    margin: auto 0;
    padding-bottom: 4px;
  }

  .dots i {
    width: 6px;
    height: 6px;
    border-radius: 50%;
    background: #54585c;
  }

  .workspace {
    display: flex;
    flex-direction: column;
    flex: 1;
    min-width: 0;
    border-left: 6px solid #76a1c0;
    border-top: 4px solid #76a1c0;
    outline: 1px solid #50565c;
  }

  .page-tabs {
    display: flex;
    align-items: flex-end;
    gap: 3px;
    height: 39px;
    padding: 0 3px;
    flex-shrink: 0;
    border-bottom: 1px solid #2d6390;
  }

  .page-tabs button {
    display: flex;
    align-items: center;
    gap: 15px;
    height: 33px;
    padding: 0 18px 0 10px;
    border: 2px solid #acb0b5;
    border-bottom: 0;
    border-radius: 4px 4px 0 0;
    background: linear-gradient(#eceff2, #d0d4d9);
  }

  .page-tabs button.active {
    padding: 0 17px 0 9px;
    border-color: #33698f;
    background: linear-gradient(#6da9cc, #eff4f9 40%);
  }

  .rule {
    height: 6px;
    flex-shrink: 0;
    border-bottom: 2px solid #4d7797;
    background: #dfeaf2;
  }

  .desk {
    display: flex;
    flex: 1;
    min-height: 0;
    margin: 3px 0 0 6px;
    border-top: 4px solid #73b0ee;
  }

  .editor {
    display: flex;
    flex-direction: column;
    flex: 1;
    min-width: 0;
    border-top: 1px solid #6b6f73;
    border-left: 1px solid #6b6f73;
    border-right: 2px solid #6b6f73;
  }

  .sheet-wrap {
    display: flex;
    flex: 1;
    min-height: 0;
  }

  .sheet {
    flex: 1;
    min-width: 0;
    overflow: hidden;
    background: #fff;
  }

  .grid {
    width: 1287px;
    border-collapse: collapse;
    table-layout: fixed;
    color: #000;
  }

  .c-head {
    width: 60px;
  }

  .c-a {
    width: 55px;
  }

  .c-std {
    width: 107px;
  }

  .c-std.odd {
    width: 106px;
  }

  .grid th {
    padding: 0;
    border: 1px solid #55585b;
    border-left: 2px solid #6a6d70;
    background: linear-gradient(#e4e4e4, #bcbcbc 60%, #c6c6c6);
    color: #333;
    font: 20px/24px "Liberation Sans", Arial, sans-serif;
  }

  .grid thead tr {
    height: 33px;
  }

  .grid thead th {
    border-top: 0;
    border-bottom: 2px solid #55585b;
  }

  .grid thead .cut {
    overflow: hidden;
    text-align: left;
    text-indent: -5px;
  }

  .grid th.on {
    background: linear-gradient(#a6cdea, #7c9fc1 60%);
    color: #000;
    font-weight: 700;
  }

  .grid td {
    padding: 0;
    border: 1px solid #c4c4c4;
    overflow: hidden;
    white-space: nowrap;
  }

  .grid .blue td {
    border-bottom: 2px solid #6455e0;
  }

  .r1 {
    height: 46px;
  }

  .r2 {
    height: 48px;
  }

  .r3,
  .r4,
  .r6 {
    height: 35px;
  }

  .r5 {
    height: 34px;
    line-height: 22px;
  }

  .grid .r1 td {
    border-top: 2px solid #6455e0;
  }

  .grid .r1 td:last-child,
  .grid .r2 td:last-child,
  .grid .r4 td:last-child,
  .grid .r5 td:last-child {
    border-right: 2px solid #6455e0;
  }

  .grid .large {
    font-size: 21px;
  }

  .grid .end span {
    display: flex;
    justify-content: flex-end;
    padding-right: 20px;
    font-size: 24px;
  }

  .grid .picked {
    background: #f6f9fd;
    box-shadow: inset 0 0 0 2px #1d2f25;
  }

  .grid .dim {
    color: #7d828b;
  }

  .grid .mono {
    font-family: "Liberation Mono", monospace;
    font-size: 16px;
  }

  .grid .mid {
    text-align: center;
  }

  .grid .right {
    text-align: right;
  }

  .select-cell {
    background: linear-gradient(#ff2010, #ff2010) 47px 100% / 3px 30px no-repeat;
  }

  .grid .box-l {
    box-shadow: inset 0 5px 0 -3px #8a86e8, inset 0 -4px 0 -2px #8a86e8, inset 5px 0 0 -3px #8a86e8;
  }

  .grid .box-r {
    box-shadow: inset 0 5px 0 -3px #8a86e8, inset 0 -4px 0 -2px #8a86e8, inset -5px 0 0 -3px #8a86e8;
  }

  .grid input {
    display: block;
    width: 26px;
    height: 26px;
    margin-left: 2px;
    appearance: none;
    border: 2px solid #777;
    background: #fff;
  }

  .vscroll {
    display: flex;
    flex-direction: column;
    width: 21px;
    flex-shrink: 0;
    padding-top: 31px;
  }

  .vscroll button,
  .hscroll button {
    display: flex;
    align-items: center;
    justify-content: center;
    height: 23px;
    border: 2px solid #74787c;
    background: linear-gradient(#f2f4f6, #c5c8cb);
  }

  .vscroll .thumb {
    flex: 1;
    background: linear-gradient(90deg, #6d9cb8, #8db9d2 50%, #6d9cb8);
  }

  .hscroll {
    height: 22px;
    flex-shrink: 0;
    padding-left: 60px;
    border-bottom: 1px solid #6b6f73;
  }

  .track {
    display: flex;
    height: 21px;
    border: 1px solid #6b6f73;
    background: linear-gradient(#dddddd, #b8bbbe);
  }

  .hscroll button {
    width: 24px;
    height: 20px;
  }

  .hscroll .thumb {
    flex: 1;
    margin-left: 46px;
    background: linear-gradient(#85b2cf, #6a93b8);
  }

  .hsplit {
    height: 10px;
    flex-shrink: 0;
    padding: 1px 0 0 7px;
  }

  .hint {
    height: 38px;
    flex-shrink: 0;
    padding: 6px 0 0 5px;
    border-top: 2px solid #5c6065;
    background: #f7fafd;
    font: 21px/28px "Liberation Serif", "Noto Sans CJK SC", serif;
  }

  .key {
    color: #f02020;
  }

  .what {
    color: #6c7075;
    font-weight: 300;
  }

  .hint b {
    color: #1414e8;
  }

  .slim {
    width: 9px;
  }

  .props {
    width: 397px;
    flex-shrink: 0;
    overflow: hidden;
    border-top: 4px solid #4f8bc3;
    border-left: 5px solid #4f8bc3;
  }

  .big-tabs.small button {
    padding: 0 4px;
    font-size: 20px;
  }

  .big-tabs.small button.active {
    padding: 0 5px;
    background: linear-gradient(#dfe7ee, #a3b6c6);
  }

  .props table {
    width: 100%;
    border-collapse: collapse;
    table-layout: fixed;
  }

  .p-guide {
    width: 30px;
  }

  .p-name {
    width: 129px;
  }

  .p-value {
    width: 131px;
  }

  .props th {
    height: 30px;
    padding: 0;
    border-right: 2px solid #a3a7ab;
    border-bottom: 2px solid #989ca0;
    background: linear-gradient(#c9cccf, #e4e6e9);
    color: #3c3f42;
    font-weight: 400;
  }

  .props td {
    height: 28px;
    padding: 0;
    border: 2px solid #9b9fa3;
    overflow: hidden;
    line-height: 24px;
    white-space: nowrap;
    text-overflow: ellipsis;
  }

  .props tr:nth-child(even) td {
    height: 29px;
  }

  .props td.guide {
    border-left: 2px solid #222;
  }

  .props td.lined {
    background:
      repeating-linear-gradient(#333 0 1px, transparent 1px 3px) 10px 0 / 1px 100% no-repeat,
      repeating-linear-gradient(90deg, #333 0 1px, transparent 1px 3px) 12px 50% / 12px 1px no-repeat;
  }

  .props td.name {
    padding-left: 2px;
    background: #fffeea;
    color: #151583;
  }

  .props td.name.group {
    background: #eeeeee;
  }

  .props td.value {
    padding: 0 4px 0 2px;
    text-align: center;
  }

  .props .orange {
    background: #ffc400;
  }

  .props .green {
    background: #00ff00;
  }

  .frame {
    display: inline-block;
    width: 56px;
    height: 23px;
    margin-right: 8px;
    padding-left: 2px;
    border: 2px solid #111;
    line-height: 20px;
    text-align: left;
    vertical-align: middle;
  }

  .dialog {
    position: absolute;
    top: 487px;
    right: 291px;
    bottom: -12px;
    left: 547px;
    display: flex;
    flex-direction: column;
    padding: 0 5px;
    border: 2px solid #3f4c56;
    border-radius: 10px 10px 0 0;
    background: linear-gradient(#78a7c4, #7ea4c3 22px, #8bb7d2 42px, #76a5c4 60px);
  }

  .dialog header {
    display: flex;
    align-items: center;
    height: 40px;
    padding: 3px 9px 0 5px;
  }

  h2 {
    flex: 1;
    margin: 0 0 0 17px;
    font-size: 20px;
    line-height: 28px;
    font-weight: 600;
  }

  .dialog-body {
    display: flex;
    flex: 1;
    min-height: 0;
    background: #eff4f9;
  }

  .dialog-main {
    display: flex;
    flex-direction: column;
    flex: 1;
    min-width: 0;
    border: 2px solid #c6cace;
    border-width: 2px 2px 0 0;
  }

  .style-tabs {
    display: flex;
    align-items: flex-end;
    gap: 4px;
    height: 37px;
    padding-left: 4px;
    border-bottom: 2px solid #2d6390;
  }

  .style-tabs button {
    height: 30px;
    padding: 0 7px;
    border: 2px solid #acb0b5;
    border-bottom: 0;
    border-radius: 3px 3px 0 0;
    background: linear-gradient(#eceff2, #cdd1d6);
    line-height: 26px;
  }

  .style-tabs .active {
    height: 32px;
    margin-bottom: -2px;
    border-color: #33698f;
    background: linear-gradient(#5f9ec6, #eff4f9 40%);
  }

  .pane {
    display: flex;
    flex: 1;
    min-height: 0;
    margin: 3px 6px 0 5px;
    border-top: 2px solid #5c6065;
    border-left: 2px solid #5c6065;
  }

  .sections {
    flex: 1;
    min-width: 0;
  }

  fieldset {
    display: flex;
    align-items: stretch;
    margin: 0;
    padding: 0;
    border: 0;
  }

  .section-title {
    display: flex;
    align-items: center;
    width: 247px;
    flex-shrink: 0;
    padding-left: 15px;
  }

  .rows {
    flex: 1;
    min-width: 0;
    padding: 0 0 5px 35px;
    border-left: 2px solid #9a9ea2;
  }

  .text {
    border-bottom: 2px solid #9a9ea2;
  }

  .bg .rows {
    padding: 6px 0 288px 35px;
  }

  .row {
    display: flex;
    align-items: center;
  }

  .opt {
    display: flex;
    align-items: center;
    margin-right: 24px;
    white-space: nowrap;
  }

  .opt:nth-child(even) {
    margin-right: 23px;
  }

  .opt.has-swatch {
    margin-right: 18px;
  }

  .opt.checked {
    color: #1a1a9c;
  }

  .opt input {
    width: 17px;
    height: 17px;
    margin-right: 6px;
    appearance: none;
    border: 2px solid #74787c;
    border-radius: 50%;
    background: radial-gradient(#bfc2c5, #eceef0);
  }

  .opt input:checked {
    border-color: #1f37c0;
    background: radial-gradient(#0a1580 35%, #2a48dc 55%);
  }

  .opt input.hover {
    border-color: #53718c;
    background: radial-gradient(#4b82b4, #7fa9cb);
  }

  .swatch {
    display: flex;
    align-items: center;
    margin-left: 5px;
    font-size: 20px;
  }

  .swatch.bold {
    font-size: 19px;
    font-weight: 600;
  }

  .swatch.big {
    font-size: 28px;
    line-height: 36px;
  }

  .classic-scroll {
    display: flex;
    flex-direction: column;
    width: 22px;
    background: #dfdfdf;
  }

  .classic-scroll button {
    display: flex;
    align-items: center;
    justify-content: center;
    height: 22px;
    border-right: 2px solid #333;
    border-bottom: 2px solid #333;
    background: #e6e6e6;
  }

  .classic-scroll .thumb {
    height: 282px;
    border: 2px solid #fff;
    border-right-color: #333;
    border-bottom-color: #333;
    background: #d3d3d3;
  }

  .dialog-side {
    display: flex;
    flex-direction: column;
    gap: 8px;
    width: 110px;
    flex-shrink: 0;
    padding: 9px 6px 0 8px;
  }

  .dialog-side button {
    height: 43px;
    flex-shrink: 0;
    border: 2px solid #225681;
    border-radius: 7px;
    background: #eeeee9;
    color: #0e1216;
    font-size: 20px;
  }

  .dialog-side .primary {
    border-color: #2b86cc;
    background: linear-gradient(#5fbcf2, #1f93df 50%, #1480d3);
  }

  .dialog-side span {
    font-family: "Liberation Mono", monospace;
    font-size: 18px;
  }

  .marks {
    position: absolute;
    top: 0;
    left: 0;
    pointer-events: none;
  }

  .note {
    position: absolute;
    top: 268px;
    left: 966px;
    margin: 0;
    color: #ff2010;
    font-size: 36px;
    line-height: 48px;
    white-space: nowrap;
  }
</style>
